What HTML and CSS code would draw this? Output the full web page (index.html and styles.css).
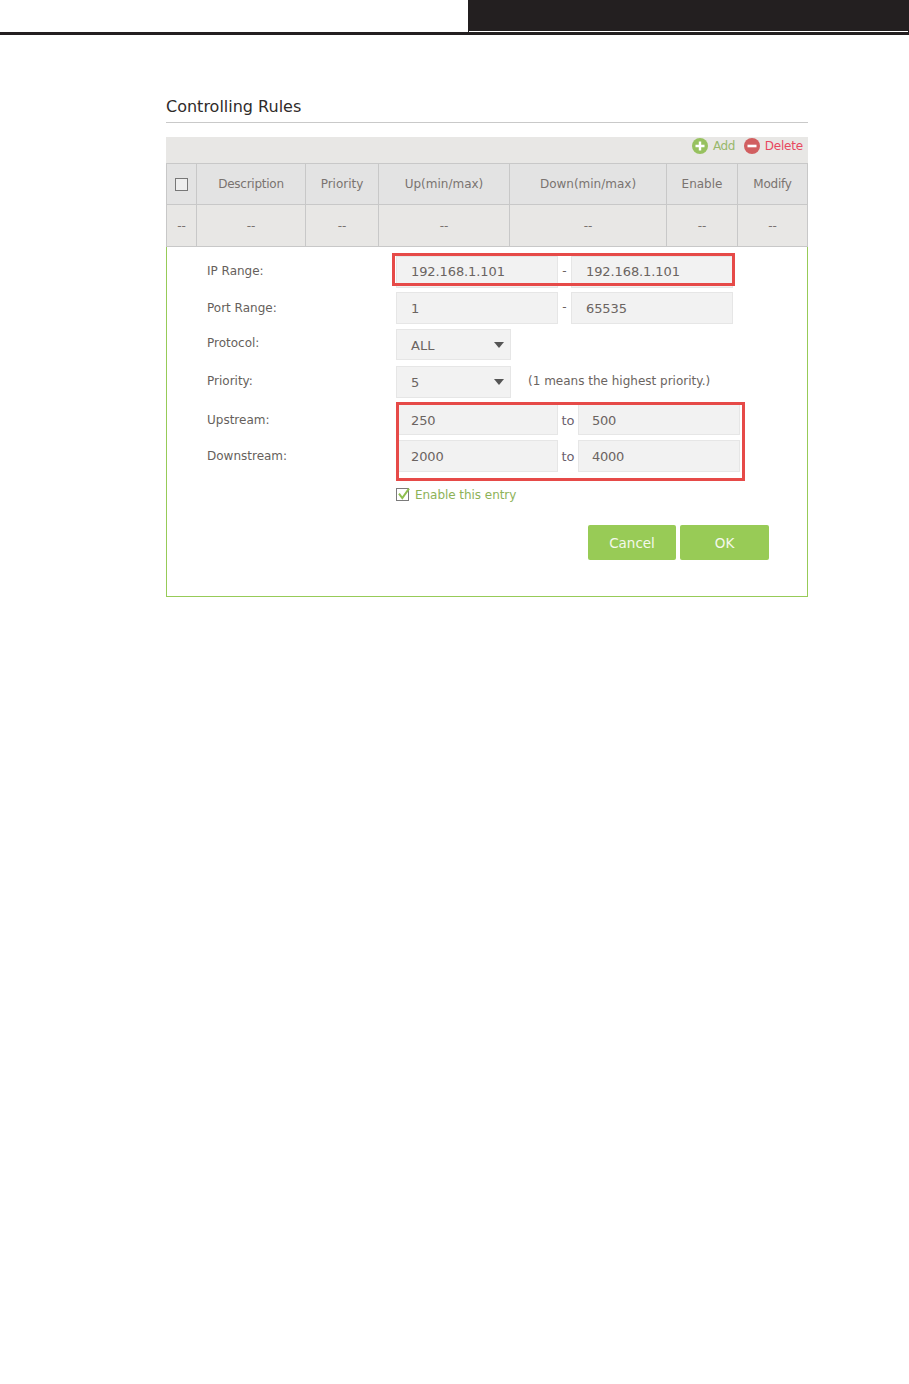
FILE: index.html
```html
<!DOCTYPE html>
<html lang="en">
<head>
<meta charset="utf-8">
<title>Controlling Rules</title>
<link rel="stylesheet" href="styles.css">
</head>
<body>
<header class="page-head"><div class="head-block"></div></header>
<main class="panel">
  <h2 class="title">Controlling Rules</h2>
  <div class="toolbar">
    <span class="tool add">
      <svg class="tool-icon" viewBox="0 0 16 16"><circle cx="8" cy="8" r="8" fill="#97c15f"/><path d="M8 3.5v9M3.5 8h9" stroke="#fff" stroke-width="2.4"/></svg>Add</span>
    <span class="tool del">
      <svg class="tool-icon" viewBox="0 0 16 16"><circle cx="8" cy="8" r="8" fill="#d15f60"/><path d="M3.5 8h9" stroke="#fff" stroke-width="2.6"/></svg>Delete</span>
  </div>
  <table class="rules">
    <colgroup>
      <col class="c1"><col class="c2"><col class="c3"><col class="c4"><col class="c5"><col class="c6"><col class="c7">
    </colgroup>
    <thead>
      <tr><th><span class="box"></span></th><th class="tight">Description</th><th>Priority</th><th>Up(min/max)</th><th>Down(min/max)</th><th>Enable</th><th class="tight">Modify</th></tr>
    </thead>
    <tbody>
      <tr><td>--</td><td>--</td><td>--</td><td>--</td><td>--</td><td>--</td><td>--</td></tr>
    </tbody>
  </table>
  <form class="editor">
    <div class="row r-ip"><label class="lbl">IP Range:</label><span class="input">192.168.1.101</span><span class="sep">-</span><span class="input">192.168.1.101</span></div>
    <div class="row r-port"><label class="lbl">Port Range:</label><span class="input">1</span><span class="sep">-</span><span class="input">65535</span></div>
    <div class="row r-sel"><label class="lbl">Protocol:</label><span class="select">ALL<i class="caret"></i></span></div>
    <div class="row r-pri"><label class="lbl">Priority:</label><span class="select">5<i class="caret"></i></span><span class="hint">(1 means the highest priority.)</span></div>
    <div class="row r-up"><label class="lbl">Upstream:</label><span class="input">250</span><span class="sep to">to</span><span class="input">500</span></div>
    <div class="row r-down"><label class="lbl">Downstream:</label><span class="input">2000</span><span class="sep to">to</span><span class="input">4000</span></div>
    <div class="row r-check">
      <span class="check"><svg viewBox="0 0 14 14"><path d="M3 6.7l3.3 4.3L13 1.7" fill="none" stroke="#8fbf4f" stroke-width="2"/></svg></span>
      <span class="check-text">Enable this entry</span>
    </div>
    <div class="actions"><span class="btn cancel">Cancel</span><span class="btn ok">OK</span></div>
    <div class="mark mark-ip"></div>
    <div class="mark mark-stream"></div>
  </form>
</main>
</body>
</html>
```
FILE: styles.css
```css
* { box-sizing: border-box; }
html, body { margin: 0; padding: 0; background: #fff; }
body {
  font-family: "DejaVu Sans", Verdana, sans-serif;
  font-size: 12px;
  color: #6b6461;
  height: 1384px;
  overflow: hidden;
}
.page-head {
  height: 35px;
  border-bottom: 3px solid #231f20;
  display: flex;
  justify-content: flex-end;
}
.head-block {
  width: 441px;
  height: 32px;
  background: #231f20;
  position: relative;
}
.head-block::after {
  content: "";
  position: absolute;
  left: 1px;
  right: 1px;
  bottom: 0;
  height: 1px;
  background: #fff;
}
.panel { margin: 0 0 0 166px; width: 642px; }
.title {
  margin: 0;
  padding-top: 61px;
  height: 88px;
  font-size: 16px;
  font-weight: 400;
  line-height: 22px;
  color: #2f2b2a;
  border-bottom: 1px solid #c9c9c9;
}
.toolbar {
  margin-top: 14px;
  height: 26px;
  background: #e8e7e5;
  display: flex;
  justify-content: flex-end;
  align-items: flex-start;
  gap: 9px;
  padding: 1px 5px 0 0;
  line-height: 16px;
  letter-spacing: -0.2px;
}
.tool { display: flex; align-items: center; gap: 5px; height: 16px; }
.tool-icon { width: 16px; height: 16px; }
.add { color: #98b86c; letter-spacing: -0.5px; }
.del { color: #e8475f; }
.rules {
  width: 641px;
  table-layout: fixed;
  border-collapse: collapse;
  background: #e8e7e5;
}
.c1 { width: 30px; }
.c2 { width: 109px; }
.c3 { width: 73px; }
.c4 { width: 131px; }
.c5 { width: 157px; }
.c6 { width: 71px; }
.c7 { width: 70px; }
.rules th, .rules td {
  border: 1px solid #c8c8c8;
  padding: 0;
  text-align: center;
  font-weight: 400;
  color: #7a7370;
}
.rules th { background: #e3e3e3; height: 41px; }
.rules td { height: 42px; }
.rules .tight { letter-spacing: -0.25px; }
.box {
  display: block;
  width: 13px;
  height: 13px;
  margin: 1px 0 0 8px;
  border: 1px solid #777;
  background: #eee;
}
.editor {
  position: relative;
  height: 350px;
  padding: 9px 0 0 40px;
  border: 1px solid #97cb58;
  border-top: 0;
}
.row {
  display: flex;
  align-items: flex-start;
  height: 32px;
  margin-bottom: 5px;
}
.r-ip { margin-bottom: 4px; }
.r-sel { height: 31px; margin-bottom: 6px; }
.lbl { width: 189px; flex: none; line-height: 30px; color: #665f5c; }
.r-port .lbl { line-height: 32px; }
.r-sel .lbl { line-height: 28px; }
.r-up .lbl { line-height: 34px; }
.r-down .lbl { line-height: 32px; }
.input {
  width: 162px;
  height: 32px;
  flex: none;
  padding-left: 14px;
  background: #f2f2f2;
  border: 1px solid #e6e6e6;
  font-size: 13px;
  line-height: 31px;
  letter-spacing: -0.1px;
  color: #6b6461;
}
.r-ip .input { line-height: 29px; }
.r-up .input { line-height: 33px; }
.to + .input { padding-left: 13px; letter-spacing: -0.3px; }
.sep { width: 13px; flex: none; text-align: center; line-height: 30px; color: #6b6461; }
.to { width: 20px; color: #6b5f70; font-size: 13px; line-height: 34px; }
.r-up .to { line-height: 36px; }
.select {
  position: relative;
  width: 115px;
  height: 100%;
  flex: none;
  padding-left: 14px;
  background: #f2f2f2;
  border: 1px solid #e6e6e6;
  font-size: 13px;
  line-height: 31px;
}
.caret {
  position: absolute;
  right: 6px;
  top: 12px;
  border-left: 5px solid transparent;
  border-right: 5px solid transparent;
  border-top: 6px solid #555;
}
.hint { margin-left: 17px; line-height: 30px; font-size: 12px; }
.r-check {
  margin: 16px 0 0 189px;
  height: 13px;
  align-items: center;
  gap: 6px;
}
.check {
  position: relative;
  width: 13px;
  height: 13px;
  border: 1px solid #7b7b7b;
}
.check svg { position: absolute; left: -1px; top: -2px; width: 14px; height: 14px; }
.check-text { color: #8db257; line-height: 15px; padding-top: 2px; letter-spacing: -0.05px; }
.actions {
  display: flex;
  justify-content: flex-end;
  gap: 4px;
  margin: 24px 38px 0 0;
}
.btn {
  height: 35px;
  background: #98cb56;
  color: #f4f8ec;
  font-size: 13.5px;
  line-height: 37px;
  text-align: center;
  border-radius: 2px;
}
.cancel { width: 88px; }
.ok { width: 89px; }
.mark { position: absolute; border: 3px solid #e64a48; pointer-events: none; }
.mark-ip { left: 225px; top: 6px; width: 343px; height: 33px; }
.mark-stream { left: 229px; top: 155px; width: 349px; height: 79px; }
```
